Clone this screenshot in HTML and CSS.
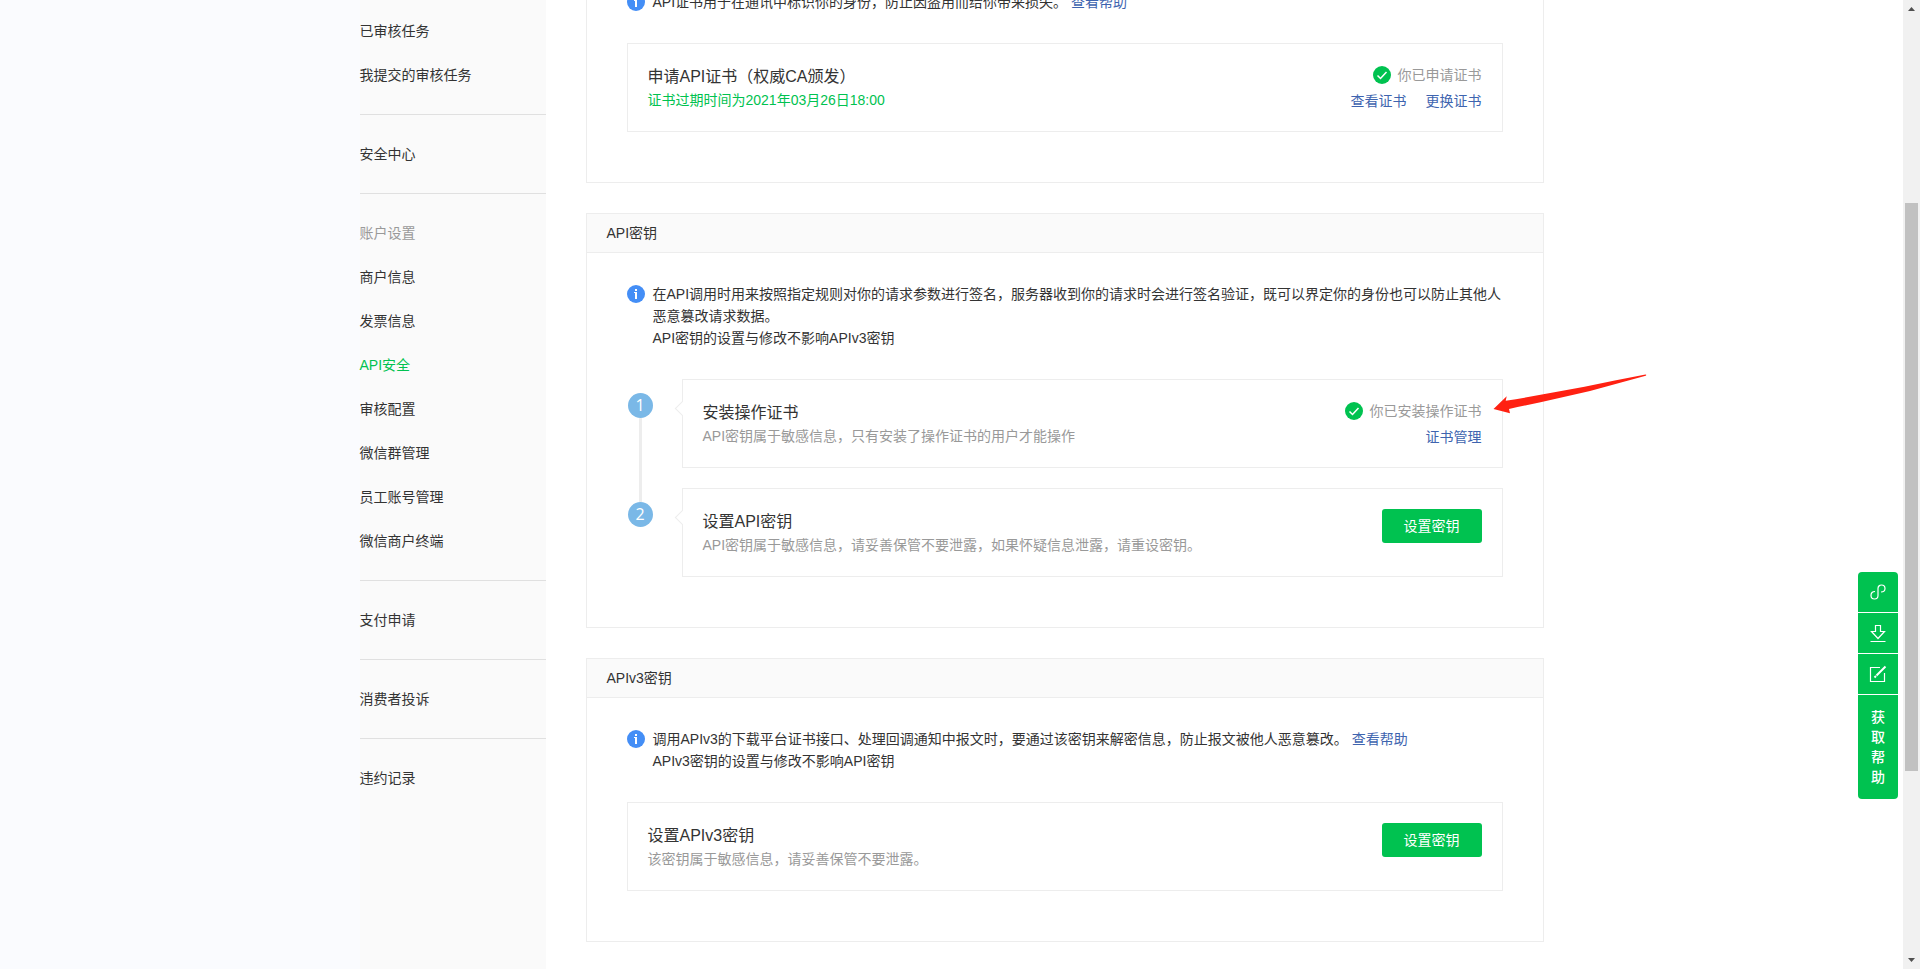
FILE: index.html
```html
<!DOCTYPE html>
<html lang="zh-CN">
<head>
<meta charset="UTF-8">
<meta name="viewport" content="width=device-width, initial-scale=1.0">
<title>API安全</title>
<link rel="stylesheet" href="styles.css">
</head>
<body>
<div class="page">
    <nav class="sidebar">
        <ul class="menu">
            <li><a href="#">已审核任务</a></li>
            <li><a href="#">我提交的审核任务</a></li>
        </ul>
        <ul class="menu">
            <li><a href="#">安全中心</a></li>
        </ul>
        <ul class="menu">
            <li class="menu-title">账户设置</li>
            <li><a href="#">商户信息</a></li>
            <li><a href="#">发票信息</a></li>
            <li><a href="#" class="active">API安全</a></li>
            <li><a href="#">审核配置</a></li>
            <li><a href="#">微信群管理</a></li>
            <li><a href="#">员工账号管理</a></li>
            <li><a href="#">微信商户终端</a></li>
        </ul>
        <ul class="menu">
            <li><a href="#">支付申请</a></li>
        </ul>
        <ul class="menu">
            <li><a href="#">消费者投诉</a></li>
        </ul>
        <ul class="menu">
            <li><a href="#">违约记录</a></li>
        </ul>
    </nav>

    <main class="main">
        <section class="panel panel-cert">
            <div class="panel-body">
                <div class="tips">
                    <svg class="icon" viewBox="0 0 18 18"><circle cx="9" cy="9" r="9" fill="#448ef6"/><path d="M8 4h2v2H8zM7 7h3v7H8V8H7z" fill="#fff"/></svg>
                    <p>API证书用于在通讯中标识你的身份，防止因盗用而给你带来损失。 <a href="#">查看帮助</a></p>
                </div>
                <div class="card">
                    <div class="card-text">
                        <h3>申请API证书（权威CA颁发）</h3>
                        <p class="green">证书过期时间为2021年03月26日18:00</p>
                    </div>
                    <div class="card-side">
                        <div class="status">
                            <svg class="icon" viewBox="0 0 18 18"><circle cx="9" cy="9" r="9" fill="#00c250"/><path d="M4.500 9.500l3 3 6-6.500" fill="none" stroke="#fff" stroke-width="1.500"/></svg>
                            <span>你已申请证书</span>
                        </div>
                        <div class="links"><a href="#">查看证书</a><a href="#">更换证书</a></div>
                    </div>
                </div>
            </div>
        </section>

        <section class="panel">
            <h2 class="panel-head">API密钥</h2>
            <div class="panel-body">
                <div class="tips">
                    <svg class="icon" viewBox="0 0 18 18"><circle cx="9" cy="9" r="9" fill="#448ef6"/><path d="M8 4h2v2H8zM7 7h3v7H8V8H7z" fill="#fff"/></svg>
                    <p>在API调用时用来按照指定规则对你的请求参数进行签名，服务器收到你的请求时会进行签名验证，既可以界定你的身份也可以防止其他人恶意篡改请求数据。<br>API密钥的设置与修改不影响APIv3密钥</p>
                </div>
                <ol class="steps">
                    <li class="step">
                        <span class="step-num">1</span>
                        <div class="card">
                            <div class="card-text">
                                <h3>安装操作证书</h3>
                                <p>API密钥属于敏感信息，只有安装了操作证书的用户才能操作</p>
                            </div>
                            <div class="card-side">
                                <div class="status">
                                    <svg class="icon" viewBox="0 0 18 18"><circle cx="9" cy="9" r="9" fill="#00c250"/><path d="M4.500 9.500l3 3 6-6.500" fill="none" stroke="#fff" stroke-width="1.500"/></svg>
                                    <span>你已安装操作证书</span>
                                </div>
                                <div class="links"><a href="#">证书管理</a></div>
                            </div>
                            <svg class="pointer" viewBox="0 0 154 40"><path d="M0.500 35L13.700 22.300 12.700 26.700C60 19.500 105 10 152.500 0.600Q154 1 152.700 1.700L97 17C70 23.500 43 29 16 35L17 39.300Z" fill="#ff2112"/></svg>
                        </div>
                    </li>
                    <li class="step">
                        <span class="step-num">2</span>
                        <div class="card">
                            <div class="card-text">
                                <h3>设置API密钥</h3>
                                <p>API密钥属于敏感信息，请妥善保管不要泄露，如果怀疑信息泄露，请重设密钥。</p>
                            </div>
                            <button type="button" class="btn">设置密钥</button>
                        </div>
                    </li>
                </ol>
            </div>
        </section>

        <section class="panel">
            <h2 class="panel-head">APIv3密钥</h2>
            <div class="panel-body">
                <div class="tips">
                    <svg class="icon" viewBox="0 0 18 18"><circle cx="9" cy="9" r="9" fill="#448ef6"/><path d="M8 4h2v2H8zM7 7h3v7H8V8H7z" fill="#fff"/></svg>
                    <p>调用APIv3的下载平台证书接口、处理回调通知中报文时，要通过该密钥来解密信息，防止报文被他人恶意篡改。 <a href="#">查看帮助</a><br>APIv3密钥的设置与修改不影响API密钥</p>
                </div>
                <div class="card">
                    <div class="card-text">
                        <h3>设置APIv3密钥</h3>
                        <p>该密钥属于敏感信息，请妥善保管不要泄露。</p>
                    </div>
                    <button type="button" class="btn">设置密钥</button>
                </div>
            </div>
        </section>
    </main>
</div>

<div class="toolbar">
    <button type="button" aria-label="链接">
        <svg viewBox="0 0 16 16"><path d="M5 7.500C2.500 7.500 1 9 1 11.200S2.500 15 4.500 15 8 13.500 8 11.500V4.500C8 2.500 9.500 1 11.500 1S15 2.500 15 4.500 13.500 8 11 8"/></svg>
    </button>
    <button type="button" aria-label="下载">
        <svg viewBox="0 0 16 16"><path d="M5.500 0.500h5v6h4L8 13.500 1.500 6.500h4zM0.500 16.500h15"/></svg>
    </button>
    <button type="button" aria-label="反馈">
        <svg viewBox="0 0 16 16"><path d="M10 1.500H0.500v14h14V7"/><path d="M6.500 9.500l9-9" stroke-width="2"/><path d="M4.500 11.500l1.500-1.500" stroke-width="2"/></svg>
    </button>
    <button type="button" class="help">获<br>取<br>帮<br>助</button>
</div>

<div class="scrollbar">
    <svg viewBox="0 0 17 17"><path d="M5 11l3.500-4 3.500 4z" fill="#505050"/></svg>
    <div class="track"><div class="thumb"></div></div>
    <svg viewBox="0 0 17 17"><path d="M5 6l3.500 4 3.500-4z" fill="#505050"/></svg>
</div>
</body>
</html>
```
FILE: styles.css
```css
* {
    box-sizing: border-box;
}
body {
    margin: 0;
    padding-right: 17px;
    height: 100vh;
    overflow: hidden;
    font-family: "Liberation Sans", "Noto Sans CJK SC", sans-serif;
    font-size: 14px;
    line-height: 22px;
    color: #333;
    background: #fff;
}
h2, h3, p, ul, ol {
    margin: 0;
    padding: 0;
    font-weight: normal;
    list-style: none;
}
a {
    color: #3e64af;
    text-decoration: none;
}
button {
    border: none;
    background: #00c250;
    color: #fff;
    font: inherit;
    cursor: pointer;
}

.page {
    display: grid;
    grid-template-columns: 1fr 186px 998px 1fr;
    min-height: 100vh;
}
.page::before {
    content: "";
    background: #fafbfe;
}

/* sidebar */
.sidebar {
    padding-top: 9px;
    background: #fafafa;
}
.menu {
    padding-bottom: 17px;
    line-height: 44px;
}
.menu + .menu {
    padding-top: 17px;
    border-top: 1px solid #e0e0e0;
}
.menu a {
    display: block;
    color: #333;
}
.menu .active {
    color: #00c250;
}
.menu-title {
    color: #999;
}

/* panels */
.main {
    padding-left: 40px;
}
.panel {
    margin-bottom: 30px;
    border: 1px solid #ededed;
}
.panel-cert {
    margin-top: -40px;
}
.panel-head {
    height: 39px;
    padding: 0 20px;
    border-bottom: 1px solid #ededed;
    background: #fafafa;
    font-size: 14px;
    line-height: 38px;
}
.panel-body {
    padding: 30px 40px 50px;
}
.tips {
    display: flex;
    gap: 8px;
    margin-bottom: 30px;
}
.icon {
    flex: none;
    width: 18px;
    height: 18px;
    margin-top: 2px;
}

.card {
    position: relative;
    display: flex;
    justify-content: space-between;
    align-items: flex-start;
    flex: 1;
    padding: 20px;
    border: 1px solid #ededed;
}
.card h3 {
    font-size: 16px;
    line-height: 25px;
}
.card-text p {
    color: #999;
}
.card-text .green {
    color: #00c250;
}
.card-side {
    display: flex;
    flex-direction: column;
    align-items: flex-end;
    gap: 4px;
    height: 47px;
}
.status {
    display: flex;
    gap: 7px;
    color: #999;
}
.links {
    display: flex;
    gap: 19px;
}
.btn {
    width: 100px;
    height: 34px;
    border-radius: 3px;
}

/* steps */
.steps {
    display: flex;
    flex-direction: column;
    gap: 20px;
}
.step {
    position: relative;
    display: flex;
    gap: 29px;
    padding-left: 1px;
}
.step-num {
    width: 25px;
    height: 25px;
    margin-top: 14px;
    border-radius: 50%;
    background: #7ab8e7;
    color: #fff;
    font-family: "Open Sans", sans-serif;
    font-size: 16px;
    line-height: 25px;
    text-align: center;
}
.step:first-child::before {
    content: "";
    position: absolute;
    left: 12px;
    top: 39px;
    width: 3px;
    height: 84px;
    background: #ededed;
}
.step .card::before {
    content: "";
    position: absolute;
    left: -6px;
    top: 23px;
    width: 10px;
    height: 10px;
    border: 1px solid #ededed;
    border-top: none;
    border-right: none;
    background: #fff;
    transform: rotate(45deg);
}
.pointer {
    position: absolute;
    top: -6px;
    right: -145px;
    width: 154px;
    height: 40px;
}

/* floating tools */
.toolbar {
    position: fixed;
    right: 22px;
    bottom: 170px;
    display: flex;
    flex-direction: column;
    gap: 1px;
    width: 40px;
    border-radius: 4px;
    overflow: hidden;
}
.toolbar button {
    display: flex;
    align-items: center;
    justify-content: center;
    height: 40px;
    padding: 0;
}
.toolbar svg {
    width: 16px;
    height: 16px;
    overflow: visible;
    fill: none;
    stroke: #fff;
    stroke-width: 1.2;
}
.toolbar .help {
    display: block;
    height: 104px;
    line-height: 20px;
    font-weight: 500;
}

.scrollbar {
    position: fixed;
    top: 0;
    right: 0;
    bottom: 0;
    display: flex;
    flex-direction: column;
    width: 17px;
    background: #f1f1f1;
}
.scrollbar svg {
    width: 17px;
    height: 17px;
}
.track {
    display: grid;
    grid-template-rows: 186fr 568fr 181fr;
    flex: 1;
    padding: 0 2px;
}
.thumb {
    grid-row: 2;
    background: #c1c1c1;
}
```
